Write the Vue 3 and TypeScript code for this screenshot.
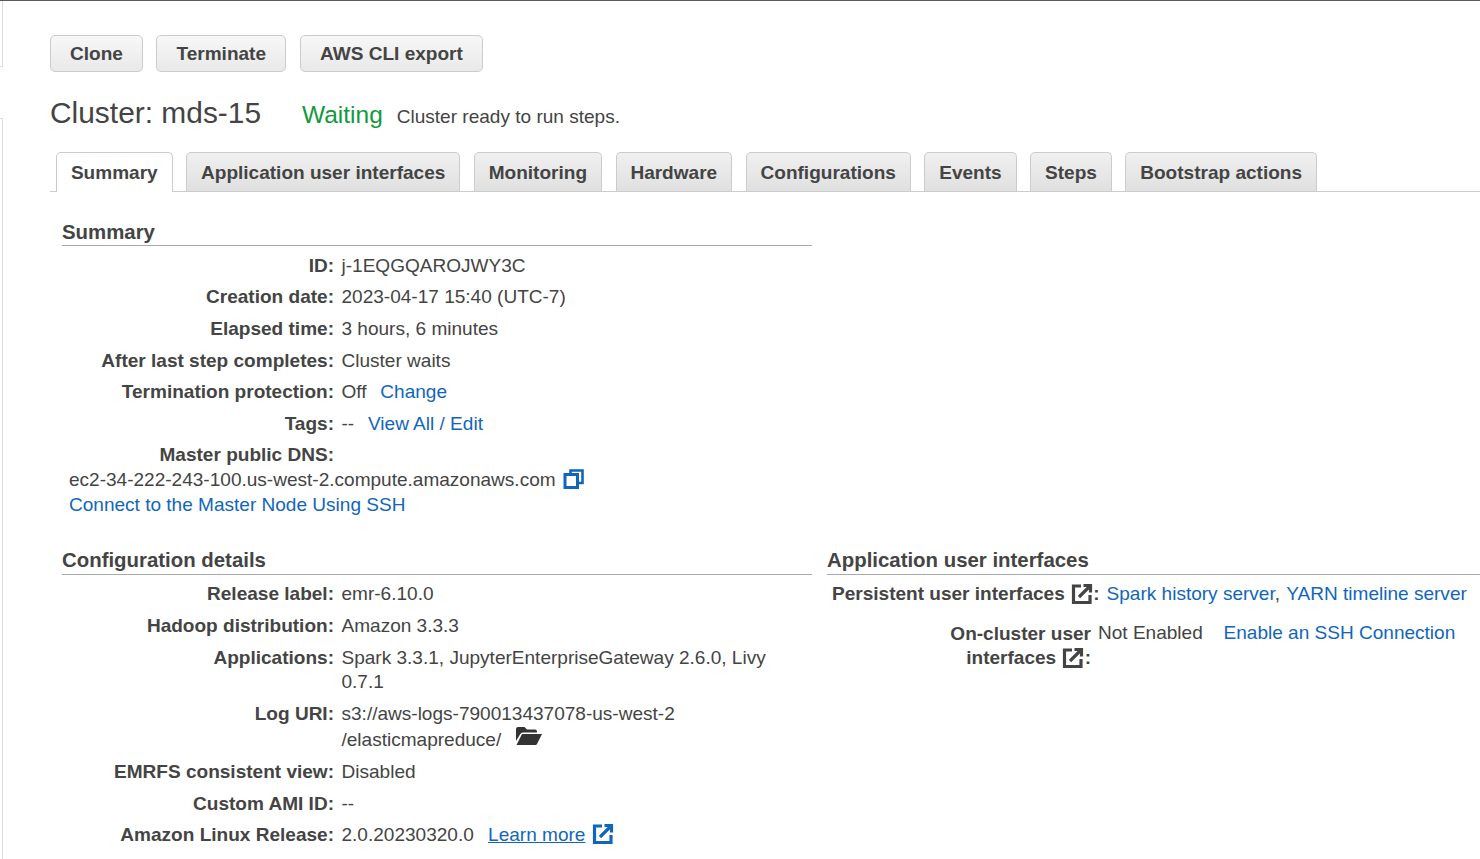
<script setup lang="ts">
interface Row {
  label: string
  value: string
  pad?: string
}

const tabs = ['Summary', 'Application user interfaces', 'Monitoring', 'Hardware', 'Configurations', 'Events', 'Steps', 'Bootstrap actions']

const summaryRows: Row[] = [
  { label: 'ID:', value: 'j-1EQGQAROJWY3C' },
  { label: 'Creation date:', value: '2023-04-17 15:40 (UTC-7)' },
  { label: 'Elapsed time:', value: '3 hours, 6 minutes', pad: 'tall' },
  { label: 'After last step completes:', value: 'Cluster waits', pad: 'short' }
]
</script>

<template>
  <div class="page">
    <div class="sideTop"></div>
    <div class="sideBottom"></div>

    <div class="actions">
      <button class="btn">Clone</button>
      <button class="btn">Terminate</button>
      <button class="btn">AWS CLI export</button>
    </div>

    <div class="heading">
      <h1 class="title">Cluster: mds-15</h1>
      <span class="state">Waiting</span>
      <span class="stateMsg">Cluster ready to run steps.</span>
    </div>

    <div class="tabs">
      <div v-for="(tab, i) in tabs" :key="tab" class="tab" :class="{ active: i === 0 }">{{ tab }}</div>
    </div>

    <div class="section summary">
      <h2 class="sectionTitle">Summary</h2>
      <div v-for="row in summaryRows" :key="row.label" class="row" :class="row.pad">
        <div class="label">{{ row.label }}</div>
        <div class="value">{{ row.value }}</div>
      </div>
      <div class="row tall">
        <div class="label">Termination protection:</div>
        <div class="value">Off <a class="link gap">Change</a></div>
      </div>
      <div class="row short">
        <div class="label">Tags:</div>
        <div class="value">-- <a class="link gap">View All / Edit</a></div>
      </div>
      <div class="row dnsLabel">
        <div class="label">Master public DNS:</div>
      </div>
      <div class="dns">
        <div class="dnsLine">
          ec2-34-222-243-100.us-west-2.compute.amazonaws.com
          <svg class="copyIcon" width="21" height="20" viewBox="0 0 21 20" fill="none" stroke="#1166bb" stroke-width="3">
            <path d="M7.5 4.5V1.5H19.5V14H16" stroke-width="2.6" />
            <rect x="2" y="5.5" width="12.5" height="13" />
          </svg>
        </div>
        <a class="link">Connect to the Master Node Using SSH</a>
      </div>
    </div>

    <div class="columns">
      <div class="section config">
        <h2 class="sectionTitle">Configuration details</h2>
        <div class="row tall">
          <div class="label">Release label:</div>
          <div class="value">emr-6.10.0</div>
        </div>
        <div class="row">
          <div class="label">Hadoop distribution:</div>
          <div class="value">Amazon 3.3.3</div>
        </div>
        <div class="row tall">
          <div class="label">Applications:</div>
          <div class="value">Spark 3.3.1, JupyterEnterpriseGateway 2.6.0, Livy 0.7.1</div>
        </div>
        <div class="row short">
          <div class="label">Log URI:</div>
          <div class="value">
            s3://aws-logs-790013437078-us-west-2
            <div class="logPath">
              /elasticmapreduce/
              <svg class="folderIcon" width="28" height="20" viewBox="0 0 28 20">
                <path d="M1 15V3Q1 1 3 1H9.5L12 3.5H20Q22 3.5 22 5.5V6.5H8Q6 6.5 5 8.5Z" fill="#333" />
                <path d="M1.5 19L7 8H27L22 18Q21.5 19 20.5 19H2Z" fill="#333" />
              </svg>
            </div>
          </div>
        </div>
        <div class="row tall">
          <div class="label">EMRFS consistent view:</div>
          <div class="value">Disabled</div>
        </div>
        <div class="row short">
          <div class="label">Custom AMI ID:</div>
          <div class="value">--</div>
        </div>
        <div class="row">
          <div class="label">Amazon Linux Release:</div>
          <div class="value">
            2.0.20230320.0 <a class="link under gapLearn">Learn more</a>
            <svg class="extIcon blue" width="22" height="22" viewBox="0 0 22 22" fill="none" stroke="currentColor" stroke-width="3.2">
              <path d="M10 3H2.5V19.5H19V12" />
              <path d="M8 14L18 4" />
              <path d="M12.5 2.5H19.5V9.5" />
            </svg>
          </div>
        </div>
      </div>

      <div class="section apps">
        <h2 class="sectionTitle">Application user interfaces</h2>
        <div class="appRow">
          <div class="appLabel wide">
            <span>Persistent user interfaces</span>
            <svg class="extIcon" width="22" height="22" viewBox="0 0 22 22" fill="none" stroke="currentColor" stroke-width="3.2">
              <path d="M10 3H2.5V19.5H19V12" />
              <path d="M8 14L18 4" />
              <path d="M12.5 2.5H19.5V9.5" />
            </svg><span>:</span>
          </div>
          <div class="value"><a class="link">Spark history server</a>, <a class="link yarn">YARN timeline server</a></div>
        </div>
        <div class="appRow second">
          <div class="appLabel narrow">
            <div>On-cluster user</div>
            <div class="labelLine">
              <span>interfaces</span>
              <svg class="extIcon" width="22" height="22" viewBox="0 0 22 22" fill="none" stroke="currentColor" stroke-width="3.2">
                <path d="M10 3H2.5V19.5H19V12" />
                <path d="M8 14L18 4" />
                <path d="M12.5 2.5H19.5V9.5" />
              </svg><span>:</span>
            </div>
          </div>
          <div class="value">Not Enabled <a class="link sshLink">Enable an SSH Connection</a></div>
        </div>
      </div>
    </div>
  </div>
</template>

<style>
html, body {
  margin: 0;
  background: #fff;
  overflow: hidden;
}
</style>

<style scoped>
.page {
  position: relative;
  height: 859px;
  box-sizing: border-box;
  border-top: 1px solid #545b64;
  padding: 34px 0 0 50px;
  overflow: hidden;
  font-family: "Liberation Sans", Arial, sans-serif;
  font-size: 19.04px;
  line-height: 24px;
  color: #444;
}

.sideTop,
.sideBottom {
  position: absolute;
  left: 0;
  width: 2px;
  border-right: 1px solid #ddd;
}
.sideTop {
  top: 0;
  height: 65px;
  border-bottom: 1px solid #ddd;
}
.sideBottom {
  top: 117px;
  bottom: 0;
  border-top: 1px solid #ddd;
}

.actions {
  display: flex;
  gap: 13.6px;
}
.btn {
  height: 37px;
  padding: 0 19px;
  border: 1px solid #ccc;
  border-radius: 5px;
  background: linear-gradient(#f7f7f7, #e9e9e9);
  font: bold 19.04px "Liberation Sans", Arial, sans-serif;
  color: #444;
}
.btn:last-child {
  padding: 0 19.5px;
}

.heading {
  display: flex;
  align-items: baseline;
  margin-top: 23px;
}
.title {
  margin: 0 41px 0 0;
  font-size: 29.92px;
  line-height: 36px;
  font-weight: 400;
  color: #444;
}
.state {
  font-size: 24.48px;
  color: #119a3c;
  margin-right: 14px;
}
.stateMsg {
  font-size: 19.04px;
}

.tabs {
  display: flex;
  gap: 13.6px;
  margin-top: 21px;
  padding-left: 6px;
  height: 39px;
  border-bottom: 1px solid #ccc;
}
.tab {
  box-sizing: border-box;
  height: 39px;
  padding: 8px 13.9px 0;
  border: 1px solid #ccc;
  border-bottom: 0;
  border-radius: 5px 5px 0 0;
  background: linear-gradient(#f0f0f0, #e0e0e0);
  font-weight: 700;
  white-space: nowrap;
}
.tab.active {
  height: 40px;
  background: #fff;
}

.section {
  width: 750px;
}
.summary {
  margin: 28px 0 0 12px;
}
.sectionTitle {
  margin: 0 0 7.5px;
  padding-bottom: 1px;
  border-bottom: 1px solid #aaa;
  font-size: 20.4px;
  line-height: 24px;
  font-weight: 700;
  color: #444;
}
.columns .sectionTitle {
  margin-bottom: 7px;
  padding-bottom: 2.5px;
  line-height: 23px;
}

.row {
  display: flex;
  gap: 7.5px;
  padding-bottom: 7.5px;
}
.row.tall {
  padding-bottom: 8px;
}
.row.short {
  padding-bottom: 7px;
}
.label {
  flex: 0 0 272px;
  text-align: right;
  font-weight: 700;
}
.value {
  flex: 1;
}
.link {
  color: #1166bb;
  text-decoration: none;
}
.link.gap {
  margin-left: 8.5px;
}
.link.gapLearn {
  margin-left: 9px;
}
.link.under {
  text-decoration: underline;
}

.dnsLabel {
  padding-bottom: 0;
}
.dns {
  padding-left: 7px;
  line-height: 25px;
}
.dnsLine {
  display: flex;
  align-items: center;
  gap: 7.5px;
  white-space: nowrap;
  height: 25px;
}
.copyIcon {
  flex: none;
}
.logPath {
  line-height: 26px;
}
.folderIcon {
  vertical-align: 0;
  margin-left: 8.5px;
}
.extIcon {
  vertical-align: -5px;
  margin: 0 0.5px 0 6px;
  color: #444;
}
.extIcon.blue {
  color: #1166bb;
  vertical-align: -4px;
  margin: 0 0 0 6.5px;
}

.columns {
  display: flex;
  gap: 15px;
  margin: 32px 0 0 12px;
}
.config,
.apps {
  flex: none;
}
.apps {
  width: 660px;
}
.appRow {
  display: flex;
  gap: 7px;
  white-space: nowrap;
}
.appRow.second {
  margin-top: 15px;
}
.appLabel {
  text-align: right;
  font-weight: 700;
  padding-left: 5px;
}
.appLabel.narrow {
  width: 264px;
  box-sizing: border-box;
  line-height: 25px;
}
.labelLine {
  margin-top: -1px;
}
.yarn {
  margin-left: 1px;
}
.sshLink {
  margin-left: 15.5px;
}
</style>
